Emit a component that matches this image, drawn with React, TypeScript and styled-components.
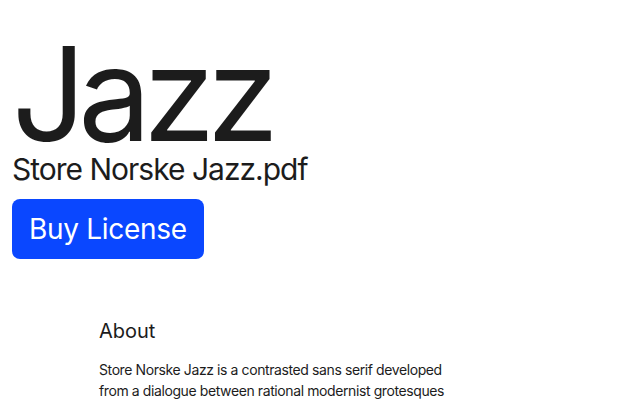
import React from "react"
import styled, { createGlobalStyle } from "styled-components"

const GlobalStyle = createGlobalStyle`
  html, body {
    margin: 0;
    padding: 0;
    background: #ffffff;
    font-family: Inter, "Noto Sans", sans-serif;
    color: #1c1c1c;
  }
`

const Page = styled.main`
  display: flex;
  flex-direction: column;
  padding: 0 12px;
`

const Hero = styled.header`
  display: flex;
  flex-direction: column;
  align-items: flex-start;
`

const Title = styled.h1`
  margin: 39px 0 0;
  font-size: 130px;
  font-weight: 400;
  line-height: 110px;
  letter-spacing: -8px;
`

const FileName = styled.div`
  margin-top: 1px;
  font-size: 30px;
  line-height: 38px;
  letter-spacing: -1px;
`

const BuyButton = styled.button`
  margin-top: 11px;
  height: 60px;
  padding: 0 17px;
  border: none;
  border-radius: 8px;
  background: #0a47ff;
  color: #ffffff;
  font-family: inherit;
  font-size: 28px;
  letter-spacing: -0.3px;
  cursor: pointer;
`

const About = styled.section`
  display: flex;
  flex-direction: column;
  gap: 16px;
  margin-top: 60px;
  padding-left: 87px;
  max-width: 350px;
`

const AboutHeading = styled.h2`
  margin: 0;
  font-size: 20px;
  font-weight: 400;
  line-height: 24px;
`

const Body = styled.p`
  margin: 0;
  font-size: 14px;
  line-height: 21px;
  letter-spacing: -0.4px;
`

export default function App() {
  return (
    <>
      <GlobalStyle />
      <Page>
        <Hero>
          <Title>Jazz</Title>
          <FileName>Store Norske Jazz.pdf</FileName>
          <BuyButton>Buy License</BuyButton>
        </Hero>
        <About>
          <AboutHeading>About</AboutHeading>
          <Body>
            Store Norske Jazz is a contrasted sans serif developed from a
            dialogue between rational modernist grotesques and the warmth of
            classic humanist typefaces.
          </Body>
        </About>
      </Page>
    </>
  )
}
